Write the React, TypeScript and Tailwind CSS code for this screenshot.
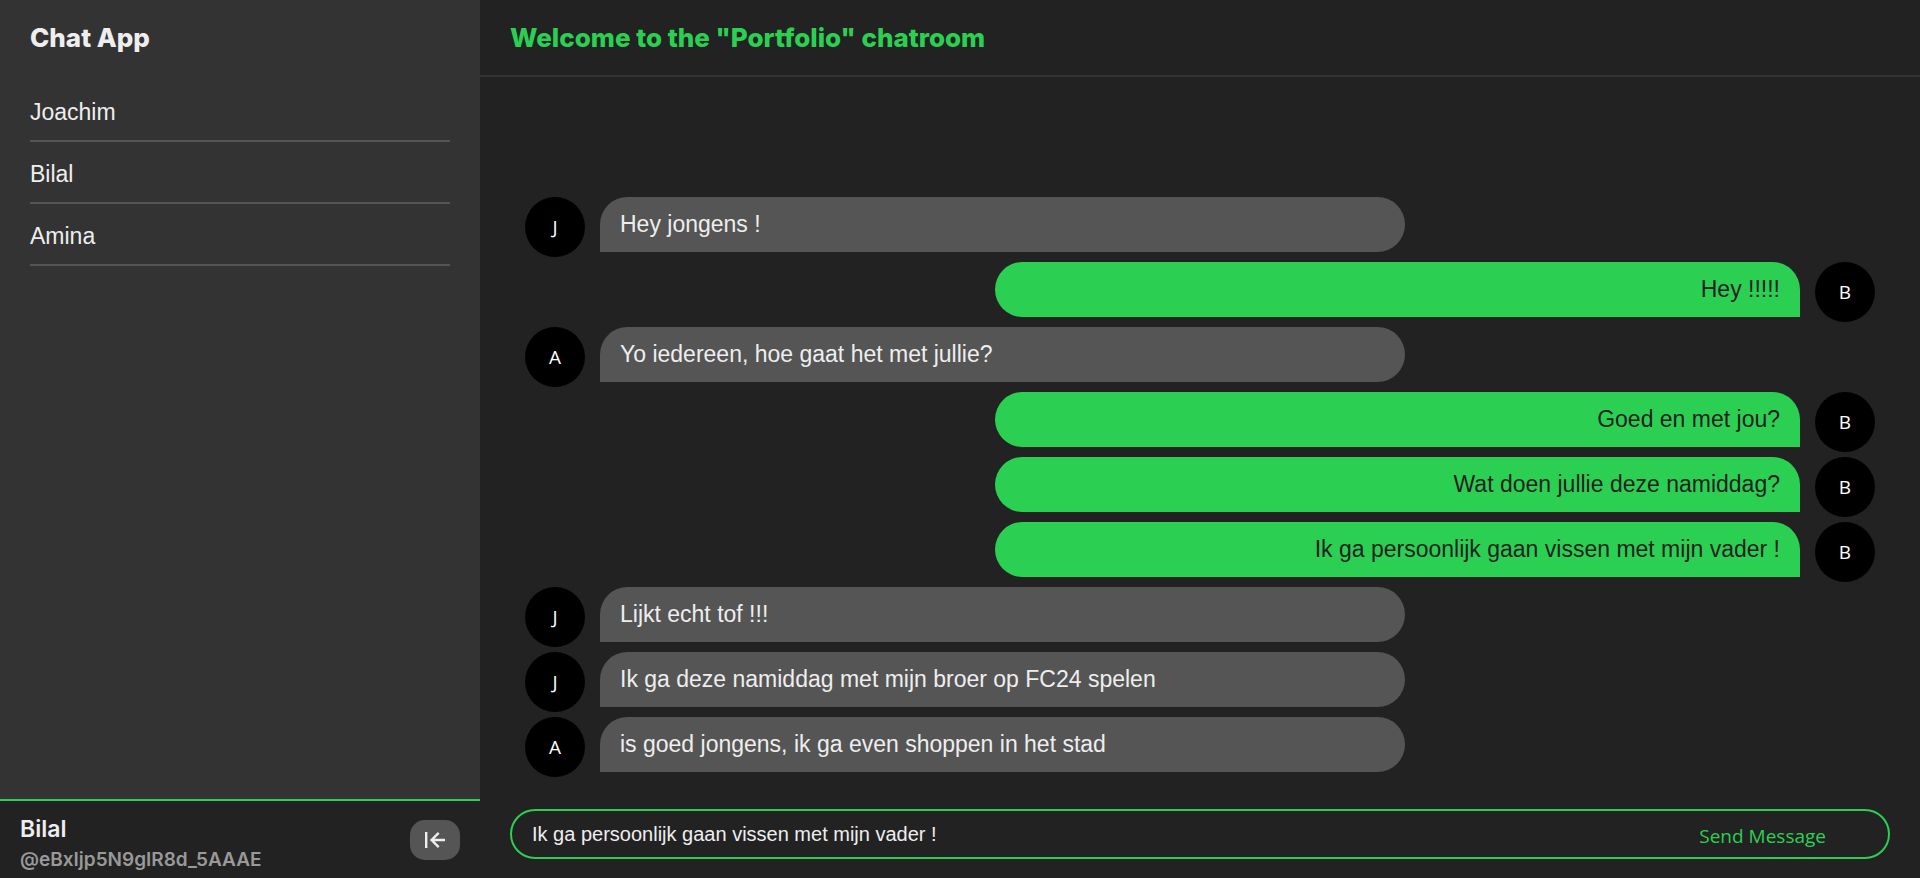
import { useState } from "react";

type Message = { id: number; initial: string; text: string; own?: boolean };

const users = ["Joachim", "Bilal", "Amina"];

const messages: Message[] = [
  { id: 1, initial: "J", text: "Hey jongens !" },
  { id: 2, initial: "B", text: "Hey !!!!!", own: true },
  { id: 3, initial: "A", text: "Yo iedereen, hoe gaat het met jullie?" },
  { id: 4, initial: "B", text: "Goed en met jou?", own: true },
  { id: 5, initial: "B", text: "Wat doen jullie deze namiddag?", own: true },
  { id: 6, initial: "B", text: "Ik ga persoonlijk gaan vissen met mijn vader !", own: true },
  { id: 7, initial: "J", text: "Lijkt echt tof !!!" },
  { id: 8, initial: "J", text: "Ik ga deze namiddag met mijn broer op FC24 spelen" },
  { id: 9, initial: "A", text: "is goed jongens, ik ga even shoppen in het stad" },
];

function LeaveIcon() {
  return (
    <svg
      width="20"
      height="16"
      viewBox="0 0 20 16"
      fill="none"
      stroke="currentColor"
      strokeWidth="2.4"
      aria-hidden="true"
    >
      <path d="M1.2 0v16M20 8H6.5M13.7 .9 6.6 8l7.1 7.1" />
    </svg>
  );
}

function Sidebar() {
  return (
    <aside className="flex w-1/4 shrink-0 flex-col bg-[#333333]">
      <div className="flex-1 px-[30px] pt-5">
        <h1 className="font-['Inter',sans-serif] text-[26px] leading-9 font-extrabold">Chat App</h1>
        <ul className="mt-6 text-[23px] leading-[30px]">
          {users.map((name) => (
            <li key={name} className="border-b-2 border-[#555555] pt-[17px] pb-[13px]">
              {name}
            </li>
          ))}
        </ul>
      </div>
      <div className="flex items-center justify-between border-t-2 border-[#2bd053] bg-[#222222] px-5 py-1 font-['Inter',sans-serif]">
        <div className="pt-2">
          <p className="text-[23px] leading-8 font-semibold">Bilal</p>
          <p className="text-[19px] leading-[29px] font-semibold text-[#999999]">@eBxIjp5N9gIR8d_5AAAE</p>
        </div>
        <button
          type="button"
          aria-label="Leave chatroom"
          className="flex h-10 w-[50px] items-center justify-center rounded-[15px] bg-[#555555]"
        >
          <LeaveIcon />
        </button>
      </div>
    </aside>
  );
}

function MessageRow({ message }: { message: Message }) {
  return (
    <li className={message.own ? "flex h-[65px] flex-row-reverse gap-[15px]" : "flex h-[65px] gap-[15px]"}>
      <span className="flex size-[60px] shrink-0 items-center justify-center rounded-full bg-black font-['Open_Sans',sans-serif] text-[19px] text-white">
        {message.initial}
      </span>
      <p
        className={
          message.own
            ? "h-[55px] w-[calc(70%-140px)] rounded-[30px] rounded-br-none bg-[#2bd053] px-5 text-right text-[23px] leading-[54px] text-[#222222]"
            : "h-[55px] w-[calc(70%-140px)] rounded-[30px] rounded-bl-none bg-[#555555] px-5 text-[23px] leading-[54px]"
        }
      >
        {message.text}
      </p>
    </li>
  );
}

export default function App() {
  const [draft, setDraft] = useState("Ik ga persoonlijk gaan vissen met mijn vader !");

  return (
    <div className="flex min-h-screen bg-[#222222] font-['Liberation_Sans',Arial,sans-serif] text-[#eeeeee]">
      <Sidebar />
      <main className="flex min-w-0 flex-1 flex-col">
        <header className="border-b-2 border-[#333333] px-[30px] pt-5 pb-[19px]">
          <h2 className="font-['Inter',sans-serif] text-[26px] leading-9 font-extrabold text-[#2bd053]">
            Welcome to the "Portfolio" chatroom
          </h2>
        </header>
        <ul className="flex flex-1 flex-col justify-end px-[45px] pb-[27px]">
          {messages.map((message) => (
            <MessageRow key={message.id} message={message} />
          ))}
        </ul>
        <form
          className="mx-[30px] mb-[19px] flex h-[50px] items-center rounded-full border-2 border-[#2bd053] pr-[62px] pl-5"
          onSubmit={(event) => event.preventDefault()}
        >
          <input
            type="text"
            aria-label="Message"
            value={draft}
            onChange={(event) => setDraft(event.target.value)}
            className="min-w-0 flex-1 bg-transparent text-[20px] leading-7 outline-none"
          />
          <button type="submit" className="pt-1 font-['Open_Sans',sans-serif] text-[19px] leading-7 text-[#2bd053]">
            Send Message
          </button>
        </form>
      </main>
    </div>
  );
}
